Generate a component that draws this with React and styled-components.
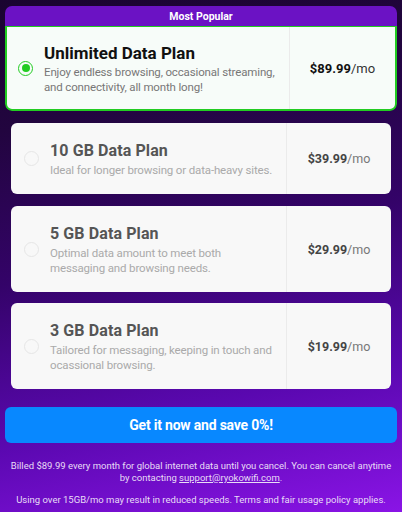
import React from "react";
import styled, { createGlobalStyle } from "styled-components";

const Global = createGlobalStyle`
  html, body { margin: 0; padding: 0; }
  body {
    width: 402px;
    min-height: 512px;
    font-family: Roboto, "Noto Sans", sans-serif;
    background: linear-gradient(168deg, #1a0430 0%, #22053f 22%, #340369 48%, #5a08b0 75%, #8a14e6 100%);
  }
`;

const Page = styled.div`
  box-sizing: border-box;
  width: 402px;
  height: 512px;
  padding: 6px 5px 0;
  display: flex;
  flex-direction: column;
  overflow: hidden;
`;

const PopularWrap = styled.div`
  display: flex;
  flex-direction: column;
  border-radius: 7px;
  overflow: hidden;
`;

const PopularHeader = styled.div`
  height: 20px;
  background: #6b12c4;
  color: #fff;
  font-size: 10.5px;
  font-weight: 700;
  display: flex;
  align-items: center;
  justify-content: center;
`;

const Card = styled.div`
  display: flex;
  box-sizing: border-box;
  height: ${(p) => p.$h}px;
  margin: ${(p) => (p.$popular ? "0" : "0 6px")};
  margin-top: ${(p) => p.$mt || 0}px;
  background: ${(p) => (p.$popular ? "#f7fcf9" : "#f8f8f8")};
  border: ${(p) => (p.$popular ? "2px solid #22cc22" : "none")};
  border-top-width: ${(p) => (p.$popular ? "1px" : "0")};
  border-radius: ${(p) => (p.$popular ? "0 0 7px 7px" : "6px")};
`;

const Main = styled.div`
  flex: 1;
  display: flex;
  align-items: center;
  padding-left: ${(p) => (p.$popular ? "11px" : "13px")};
  padding-right: 6px;
  gap: 11px;
`;

const Radio = styled.span`
  flex: none;
  box-sizing: border-box;
  width: 15px;
  height: 15px;
  border-radius: 50%;
  border: ${(p) => (p.$on ? "1.5px solid #22cc22" : "1px solid #e6e6e6")};
  display: flex;
  align-items: center;
  justify-content: center;
  &::after {
    content: "";
    display: ${(p) => (p.$on ? "block" : "none")};
    width: 8px;
    height: 8px;
    border-radius: 50%;
    background: #22cc22;
  }
`;

const Text = styled.div`
  display: flex;
  flex-direction: column;
  max-width: ${(p) => (p.$popular ? "238px" : "225px")};
`;

const Title = styled.div`
  font-size: ${(p) => (p.$popular ? "17px" : "16px")};
  font-weight: 700;
  color: ${(p) => (p.$popular ? "#111" : "#555")};
  line-height: 22px;
  letter-spacing: ${(p) => (p.$popular ? "0" : "0.1px")};
`;

const Desc = styled.div`
  font-size: 11.5px;
  line-height: 15px;
  color: ${(p) => (p.$popular ? "#777" : "#aaa")};
  margin-top: 1px;
  letter-spacing: -0.15px;
`;

const PriceCol = styled.div`
  flex: none;
  width: ${(p) => (p.$popular ? "105px" : "104px")};
  border-left: 1px solid #ebebeb;
  display: flex;
  align-items: center;
  justify-content: center;
  font-size: ${(p) => (p.$popular ? "13px" : "12.5px")};
  color: ${(p) => (p.$popular ? "#111" : "#444")};
`;

const Amount = styled.b`
  font-weight: 700;
`;

const Per = styled.span`
  color: ${(p) => (p.$popular ? "#333" : "#777")};
`;

const Button = styled.button`
  margin-top: 18px;
  height: 36px;
  border: none;
  border-radius: 6px;
  background: #0888ff;
  color: #fff;
  font-family: inherit;
  font-size: 14px;
  font-weight: 700;
  letter-spacing: -0.2px;
  cursor: pointer;
`;

const Footer = styled.p`
  margin: ${(p) => p.$mt}px 0 0;
  text-align: center;
  font-size: 9.5px;
  line-height: 12px;
  color: #e8dcf6;
  a { color: inherit; }
`;

const plans = [
  { title: "10 GB Data Plan", desc: "Ideal for longer browsing or data-heavy sites.", price: "$39.99", h: 71, mt: 12 },
  { title: "5 GB Data Plan", desc: "Optimal data amount to meet both messaging and browsing needs.", price: "$29.99", h: 86, mt: 12 },
  { title: "3 GB Data Plan", desc: "Tailored for messaging, keeping in touch and ocassional browsing.", price: "$19.99", h: 86, mt: 11 },
];

function Plan({ p, popular }) {
  return (
    <Card $popular={popular} $h={p.h} $mt={p.mt}>
      <Main $popular={popular}>
        <Radio $on={popular} />
        <Text $popular={popular}>
          <Title $popular={popular}>{p.title}</Title>
          <Desc $popular={popular}>{p.desc}</Desc>
        </Text>
      </Main>
      <PriceCol $popular={popular}>
        <Amount>{p.price}</Amount>
        <Per $popular={popular}>/mo</Per>
      </PriceCol>
    </Card>
  );
}

export default function App() {
  return (
    <>
      <Global />
      <Page>
        <PopularWrap>
          <PopularHeader>Most Popular</PopularHeader>
          <Plan
            popular
            p={{
              title: "Unlimited Data Plan",
              desc: "Enjoy endless browsing, occasional streaming, and connectivity, all month long!",
              price: "$89.99",
              h: 85,
            }}
          />
        </PopularWrap>
        {plans.map((p) => (
          <Plan key={p.title} p={p} />
        ))}
        <Button>Get it now and save 0%!</Button>
        <Footer $mt={17}>
          Billed $89.99 every month for global internet data until you cancel. You can cancel anytime by contacting{" "}
          <a href="#">support@ryokowifi.com</a>.
        </Footer>
        <Footer $mt={10}>
          Using over 15GB/mo may result in reduced speeds. Terms and fair usage policy applies.
        </Footer>
      </Page>
    </>
  );
}
